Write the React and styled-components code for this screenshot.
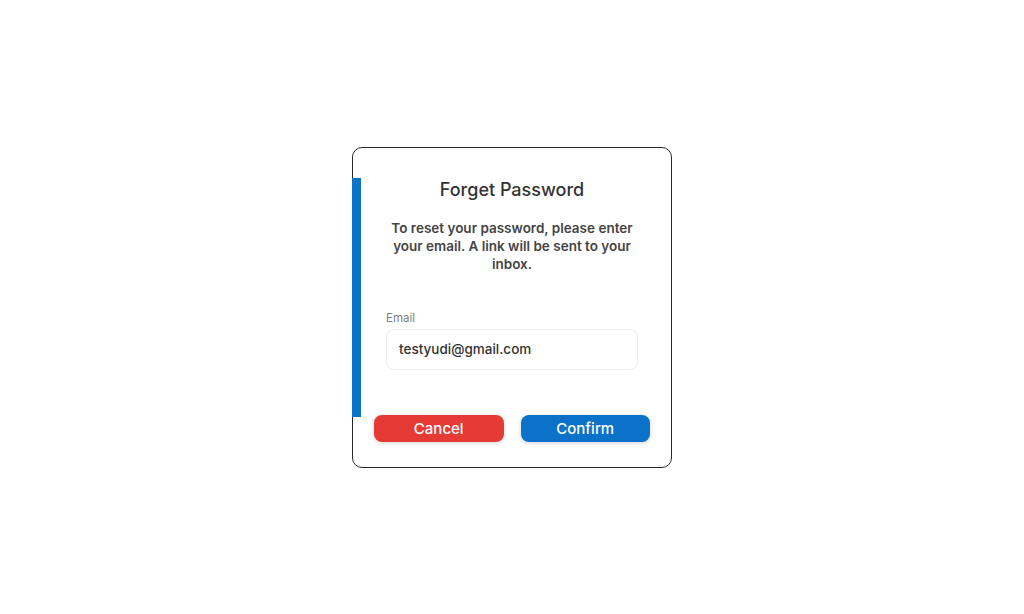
import React from "react";
import styled, { createGlobalStyle } from "styled-components";

const GlobalStyle = createGlobalStyle`
  html, body {
    margin: 0;
    padding: 0;
    background: #ffffff;
  }
  body {
    font-family: Inter, "Noto Sans", "Liberation Sans", sans-serif;
    -webkit-font-smoothing: antialiased;
  }
  * {
    box-sizing: border-box;
  }
`;

const Page = styled.div`
  min-height: 100vh;
  display: flex;
  align-items: center;
  justify-content: center;
`;

const Card = styled.div`
  position: relative;
  width: 320px;
  padding: 30px 21px 25px 21px;
  border: 1px solid #2b2b2b;
  border-radius: 10px;
  background: #fff;
  display: flex;
  flex-direction: column;

  &::before {
    content: "";
    position: absolute;
    left: -1px;
    top: 30px;
    width: 9px;
    height: 239px;
    background: #0a72c9;
  }
`;

const Title = styled.h2`
  margin: 0;
  text-align: center;
  font-size: 18px;
  line-height: 24px;
  font-weight: 500;
  color: #333;
`;

const Description = styled.p`
  margin: 17px auto 0;
  max-width: 250px;
  text-align: center;
  font-size: 13.5px;
  line-height: 18px;
  font-weight: 600;
  color: #444;
`;

const Field = styled.div`
  margin: 38px 12px 0 12px;
  display: flex;
  flex-direction: column;
  gap: 4px;
`;

const Label = styled.label`
  font-size: 11.5px;
  line-height: 14px;
  color: #808080;
`;

const Input = styled.input`
  height: 41px;
  padding: 0 12px;
  border: 1px solid #ececec;
  border-radius: 8px;
  font-family: inherit;
  font-size: 13.5px;
  font-weight: 500;
  color: #333;
  outline: none;
`;

const Actions = styled.div`
  margin-top: 45px;
  display: flex;
  gap: 17px;
`;

const Button = styled.button`
  flex: 1;
  height: 27px;
  border: none;
  border-radius: 8px;
  font-family: inherit;
  font-size: 15px;
  font-weight: 500;
  color: #fff;
  background: ${(p) => (p.$variant === "danger" ? "#e53a36" : "#0a72c9")};
  box-shadow: 0 1px 4px rgba(0, 0, 0, 0.18);
  cursor: pointer;
`;

export default function App() {
  return (
    <Page>
      <GlobalStyle />
      <Card>
        <Title>Forget Password</Title>
        <Description>
          To reset your password, please enter your email. A link will be sent
          to your inbox.
        </Description>
        <Field>
          <Label>Email</Label>
          <Input defaultValue="testyudi@gmail.com" />
        </Field>
        <Actions>
          <Button $variant="danger">Cancel</Button>
          <Button>Confirm</Button>
        </Actions>
      </Card>
    </Page>
  );
}
